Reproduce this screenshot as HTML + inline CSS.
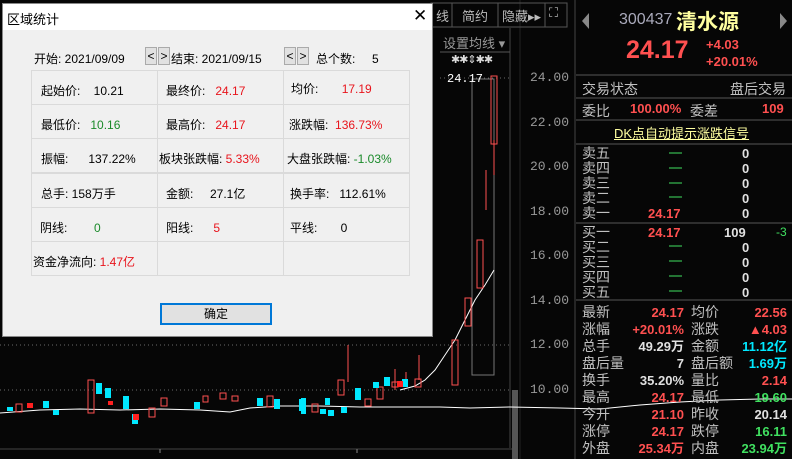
<!DOCTYPE html>
<html><head><meta charset="utf-8"><style>
*{margin:0;padding:0;box-sizing:border-box}
body{width:792px;height:459px;background:#060606;position:relative;overflow:hidden;font-family:"Liberation Sans","Noto Sans CJK SC",sans-serif}
.a{position:absolute;white-space:nowrap}
.dlg{position:absolute;left:2px;top:3px;width:431px;height:334px;background:#f0f0f0;border:1px solid #888}
.tb{position:absolute;left:0;top:0;width:100%;height:26px;background:#fff;font-size:13px;color:#000}
.cell{position:absolute;border:1px solid #dadada;font-size:12px;color:#000}
.r{color:#e8141c}.g{color:#1a8a2a}
.btn{position:absolute;border:1px solid #aaa;background:#e1e1e1;font-size:12px;text-align:center;line-height:16px;width:12px;height:18px}
.rp{font-size:14px;color:#c0c0c0}
.red{color:#ff5050}.grn{color:#40e060}.cy{color:#00e8ff}.wh{color:#e0e0e0}
.ax{position:absolute;left:530px;color:#999;font-size:13px;font-family:'Liberation Mono',monospace;line-height:14px}
</style></head><body>
<svg class="a" style="left:0;top:0" width="792" height="459">
<rect x="0" y="0" width="792" height="459" fill="#060606"/>
<g stroke="#6a6a6a" stroke-dasharray="1,3">
<line x1="0" y1="345" x2="510" y2="345"/><line x1="0" y1="390" x2="510" y2="390"/><line x1="440" y1="78" x2="510" y2="78"/>
</g>
<line x1="510" y1="28" x2="510" y2="448" stroke="#444"/>
<line x1="575" y1="0" x2="575" y2="459" stroke="#444"/>
<line x1="0" y1="449" x2="512" y2="449" stroke="#444"/>
<line x1="520" y1="0" x2="520" y2="459" stroke="#222"/>
<rect x="512" y="390" width="6" height="69" fill="#555"/>
<g fill="none" stroke="#555"><rect x="431" y="3" width="21" height="24"/><rect x="452" y="3" width="46" height="24"/><rect x="498" y="3" width="47" height="24"/><rect x="545" y="3" width="22" height="24"/></g>
<line x1="440" y1="52" x2="510" y2="52" stroke="#555"/>
<rect x="472" y="79" width="22" height="296" fill="none" stroke="#777"/>
<polyline fill="none" stroke="#fff" stroke-width="1" points="0,413 40,410 80,409 120,410 160,409 200,410 230,412 250,408 280,406 320,406 360,407 400,407 440,407 470,408 510,407 560,408 600,409 640,405 680,402 720,400 760,399 800,399 840,399 880,399 920,401 960,403 1000,406 1040,402 1080,399 1120,397 1160,395 1200,390 1240,381"/>
<polyline fill="none" stroke="#fff" points="400,390 415,386 425,380 435,370 445,355 455,340 465,320 475,300 485,285 494,270"/>
<g stroke="#ff5050" fill="none">
<rect x="16" y="404" width="6" height="8"/><rect x="88" y="380" width="6" height="33"/><rect x="149" y="408" width="6" height="9"/><rect x="161" y="398" width="6" height="8"/><rect x="203" y="396" width="5" height="6"/><rect x="220" y="393" width="6" height="6"/><rect x="232" y="396" width="6" height="5"/><rect x="267" y="396" width="6" height="11"/><rect x="312" y="404" width="6" height="8"/><rect x="338" y="380" width="6" height="15"/><rect x="365" y="399" width="6" height="7"/><rect x="377" y="387" width="6" height="12"/><rect x="392" y="382" width="6" height="5"/><rect x="415" y="379" width="6" height="8"/><rect x="452" y="340" width="6" height="45"/><rect x="465" y="298" width="6" height="28"/><rect x="477" y="240" width="6" height="48"/><rect x="491" y="76" width="6" height="68"/>
<line x1="348" y1="345" x2="348" y2="382"/><line x1="395" y1="369" x2="395" y2="390"/><line x1="406" y1="372" x2="406" y2="380"/><line x1="419" y1="355" x2="419" y2="380"/><line x1="486" y1="170" x2="486" y2="210"/><line x1="494" y1="140" x2="494" y2="175"/>
</g>
<g fill="#00e8ff">
<rect x="7" y="407" width="6" height="4"/><rect x="43" y="401" width="6" height="7"/><rect x="53" y="410" width="6" height="5"/><rect x="96" y="383" width="6" height="11"/><rect x="105" y="388" width="6" height="10"/><rect x="123" y="396" width="6" height="13"/><rect x="132" y="414" width="6" height="10"/><rect x="194" y="402" width="6" height="7"/><rect x="257" y="398" width="6" height="8"/><rect x="274" y="399" width="6" height="10"/><rect x="299" y="399" width="6" height="12"/><rect x="301" y="398" width="5" height="16"/><rect x="320" y="409" width="6" height="5"/><rect x="328" y="410" width="6" height="6"/><rect x="355" y="388" width="6" height="12"/><rect x="384" y="377" width="6" height="9"/><rect x="373" y="382" width="6" height="6"/><rect x="402" y="379" width="6" height="8"/><rect x="325" y="398" width="5" height="7"/><rect x="341" y="407" width="6" height="6"/></g>
<g fill="#ff2020"><rect x="133" y="414" width="6" height="6"/><rect x="397" y="381" width="6" height="6"/><rect x="27" y="403" width="6" height="5"/><rect x="108" y="401" width="5" height="4"/></g>
<g stroke="#888" fill="none"><line x1="160" y1="449" x2="160" y2="453"/><line x1="357" y1="449" x2="357" y2="453"/></g>
</svg>
<div class="a" style="left:436px;top:6px;color:#bbb;font-size:13px">线</div>
<div class="a" style="left:452px;top:6px;width:46px;text-align:center;color:#bbb;font-size:13px">简约</div>
<div class="a" style="left:502px;top:6px;color:#bbb;font-size:13px">隐藏▸▸</div>
<div class="a" style="left:549px;top:5px;color:#bbb;font-size:13px">⛶</div>
<div class="a" style="left:443px;top:33px;color:#999;font-size:13px">设置均线 ▾</div>
<div class="a" style="left:451px;top:53px;color:#ddd;font-size:11px;letter-spacing:-1px">✱✱⇕✱✱</div>
<div class="a" style="left:447px;top:72px;color:#fff;font-size:12px;font-family:'Liberation Mono',monospace">24.17</div>
<div class="ax" style="top:71px">24.00</div>
<div class="ax" style="top:116px">22.00</div>
<div class="ax" style="top:160px">20.00</div>
<div class="ax" style="top:205px">18.00</div>
<div class="ax" style="top:249px">16.00</div>
<div class="ax" style="top:294px">14.00</div>
<div class="ax" style="top:338px">12.00</div>
<div class="ax" style="top:383px">10.00</div>
<div class="dlg">
<div class="tb"><span class="a" style="left:4px;top:5px">区域统计</span><span class="a" style="left:410px;top:2px;font-size:17px">✕</span></div>
<div class="a" style="left:31px;top:46px;font-size:12px">开始: 2021/09/09</div>
<div class="btn" style="left:142px;top:43px">&lt;</div><div class="btn" style="left:155px;top:43px">&gt;</div>
<div class="a" style="left:168px;top:46px;font-size:12px">结束: 2021/09/15</div>
<div class="btn" style="left:281px;top:43px">&lt;</div><div class="btn" style="left:294px;top:43px">&gt;</div>
<div class="a" style="left:313px;top:46px;font-size:12px">总个数:&nbsp;&nbsp;&nbsp;&nbsp;&nbsp;5</div>
<div class="cell" style="left:28px;top:66px;width:127px;height:35px"><span class="a" style="left:9px;top:11px">起始价:&nbsp;&nbsp;&nbsp;&nbsp;10.21</span></div>
<div class="cell" style="left:154px;top:66px;width:127px;height:35px"><span class="a" style="left:8px;top:11px">最终价:&nbsp;&nbsp;&nbsp;<span class="r">24.17</span></span></div>
<div class="cell" style="left:280px;top:66px;width:127px;height:35px"><span class="a" style="left:7px;top:9px">均价:&nbsp;&nbsp;&nbsp;&nbsp;&nbsp;&nbsp;&nbsp;<span class="r">17.19</span></span></div>
<div class="cell" style="left:28px;top:100px;width:127px;height:35px"><span class="a" style="left:9px;top:11px">最低价:&nbsp;&nbsp;&nbsp;<span class="g">10.16</span></span></div>
<div class="cell" style="left:154px;top:100px;width:127px;height:35px"><span class="a" style="left:8px;top:11px">最高价:&nbsp;&nbsp;&nbsp;<span class="r">24.17</span></span></div>
<div class="cell" style="left:280px;top:100px;width:127px;height:35px"><span class="a" style="left:5px;top:11px">涨跌幅:&nbsp;&nbsp;<span class="r">136.73%</span></span></div>
<div class="cell" style="left:28px;top:134px;width:127px;height:35px"><span class="a" style="left:9px;top:11px">振幅:&nbsp;&nbsp;&nbsp;&nbsp;&nbsp;&nbsp;137.22%</span></div>
<div class="cell" style="left:154px;top:134px;width:127px;height:35px"><span class="a" style="left:1px;top:11px">板块张跌幅: <span class="r">5.33%</span></span></div>
<div class="cell" style="left:280px;top:134px;width:127px;height:35px"><span class="a" style="left:3px;top:11px">大盘张跌幅: <span class="g">-1.03%</span></span></div>
<div class="cell" style="left:28px;top:169px;width:127px;height:35px"><span class="a" style="left:9px;top:11px">总手: 158万手</span></div>
<div class="cell" style="left:154px;top:169px;width:127px;height:35px"><span class="a" style="left:8px;top:11px">金额:&nbsp;&nbsp;&nbsp;&nbsp;&nbsp;27.1亿</span></div>
<div class="cell" style="left:280px;top:169px;width:127px;height:35px"><span class="a" style="left:6px;top:11px">换手率:&nbsp;&nbsp;&nbsp;112.61%</span></div>
<div class="cell" style="left:28px;top:203px;width:127px;height:35px"><span class="a" style="left:8px;top:11px">阴线:&nbsp;&nbsp;&nbsp;&nbsp;&nbsp;&nbsp;&nbsp;&nbsp;<span class="g">0</span></span></div>
<div class="cell" style="left:154px;top:203px;width:127px;height:35px"><span class="a" style="left:8px;top:11px">阳线:&nbsp;&nbsp;&nbsp;&nbsp;&nbsp;&nbsp;<span class="r">5</span></span></div>
<div class="cell" style="left:280px;top:203px;width:127px;height:35px"><span class="a" style="left:6px;top:11px">平线:&nbsp;&nbsp;&nbsp;&nbsp;&nbsp;&nbsp;&nbsp;0</span></div>
<div class="cell" style="left:28px;top:237px;width:127px;height:35px"><span class="a" style="left:1px;top:11px">资金净流向: <span class="r">1.47亿</span></span></div>
<div class="cell" style="left:154px;top:237px;width:127px;height:35px"></div>
<div class="cell" style="left:280px;top:237px;width:127px;height:35px"></div>
<div class="a" style="left:157px;top:299px;width:112px;height:22px;border:2px solid #0078d7;background:#e1e1e1;text-align:center;font-size:12px;line-height:18px">确定</div>
</div>
<div class="a" style="left:576px;top:0;width:216px;height:459px;font-size:14px">
<svg class="a" style="left:0;top:0" width="216" height="459"><polygon points="13,13 13,29 6,21" fill="#888"/><polygon points="204,13 204,29 211,21" fill="#888"/>
<g stroke="#555"><line x1="0" y1="75" x2="216" y2="75"/><line x1="0" y1="98" x2="216" y2="98"/><line x1="0" y1="120" x2="216" y2="120"/><line x1="0" y1="144" x2="216" y2="144"/><line x1="0" y1="223" x2="216" y2="223"/><line x1="0" y1="300" x2="216" y2="300"/></g>
<g stroke="#40e060"><line x1="93" y1="153" x2="106" y2="153"/><line x1="93" y1="168" x2="106" y2="168"/><line x1="93" y1="183" x2="106" y2="183"/><line x1="93" y1="197" x2="106" y2="197"/><line x1="93" y1="246" x2="106" y2="246"/><line x1="93" y1="261" x2="106" y2="261"/><line x1="93" y1="276" x2="106" y2="276"/><line x1="93" y1="291" x2="106" y2="291"/></g></svg>
<div class="a" style="left:43px;top:11px;color:#aab;font-size:16px">300437</div>
<div class="a" style="left:100px;top:6px;color:#ffffa0;font-size:21px;font-weight:bold">清水源</div>
<div class="a red" style="left:50px;top:36px;font-size:25px;font-weight:bold">24.17</div>
<div class="a red" style="left:130px;top:36px;font-size:13px;font-weight:bold;line-height:17px">+4.03<br>+20.01%</div>
<div class="a rp" style="left:6px;top:79px">交易状态</div><div class="a rp" style="left:154px;top:79px">盘后交易</div>
<div class="a rp" style="left:6px;top:101px">委比</div><div class="a red" style="left:54px;top:101px;font-weight:bold;font-size:13px">100.00%</div><div class="a rp" style="left:114px;top:101px">委差</div><div class="a red" style="left:186px;top:101px;font-weight:bold;font-size:13px">109</div>
<div class="a" style="left:38px;top:123px;color:#ffffa0;text-decoration:underline;font-size:13px">DK点自动提示涨跌信号</div>
<div class="a rp" style="left:6px;top:146px;line-height:15px">卖五<br>卖四<br>卖三<br>卖二<br>卖一</div>
<div class="a wh" style="left:166px;top:146px;line-height:15px;font-weight:bold;font-size:13px">0<br>0<br>0<br>0<br>0</div>
<div class="a red" style="left:72px;top:206px;font-weight:bold;font-size:13px">24.17</div>
<div class="a rp" style="left:6px;top:225px;line-height:15px">买一<br>买二<br>买三<br>买四<br>买五</div>
<div class="a red" style="left:72px;top:225px;font-weight:bold;font-size:13px">24.17</div>
<div class="a wh" style="left:148px;top:225px;font-weight:bold;font-size:13px">109</div>
<div class="a grn" style="left:200px;top:225px;font-size:12px">-3</div>
<div class="a wh" style="left:166px;top:240px;line-height:15px;font-weight:bold;font-size:13px">0<br>0<br>0<br>0</div>
<div class="a rp" style="left:6px;top:304px;line-height:17px">最新<br>涨幅<br>总手<br>盘后量<br>换手<br>最高<br>今开<br>涨停<br>外盘</div>
<div class="a rp" style="left:115px;top:304px;line-height:17px">均价<br>涨跌<br>金额<br>盘后额<br>量比<br>最低<br>昨收<br>跌停<br>内盘</div>
<div class="a" style="left:40px;top:304px;width:68px;text-align:right;line-height:17px;font-weight:bold;font-size:13px"><span class="red">24.17</span><br><span class="red">+20.01%</span><br><span class="wh">49.29万</span><br><span class="wh">7</span><br><span class="wh">35.20%</span><br><span class="red">24.17</span><br><span class="red">21.10</span><br><span class="red">24.17</span><br><span class="red">25.34万</span></div>
<div class="a" style="left:140px;top:304px;width:71px;text-align:right;line-height:17px;font-weight:bold;font-size:13px"><span class="red">22.56</span><br><span class="red">▲4.03</span><br><span class="cy">11.12亿</span><br><span class="cy">1.69万</span><br><span class="red">2.14</span><br><span class="grn">19.60</span><br><span class="wh">20.14</span><br><span class="grn">16.11</span><br><span class="grn">23.94万</span></div>
</div>
</body></html>
